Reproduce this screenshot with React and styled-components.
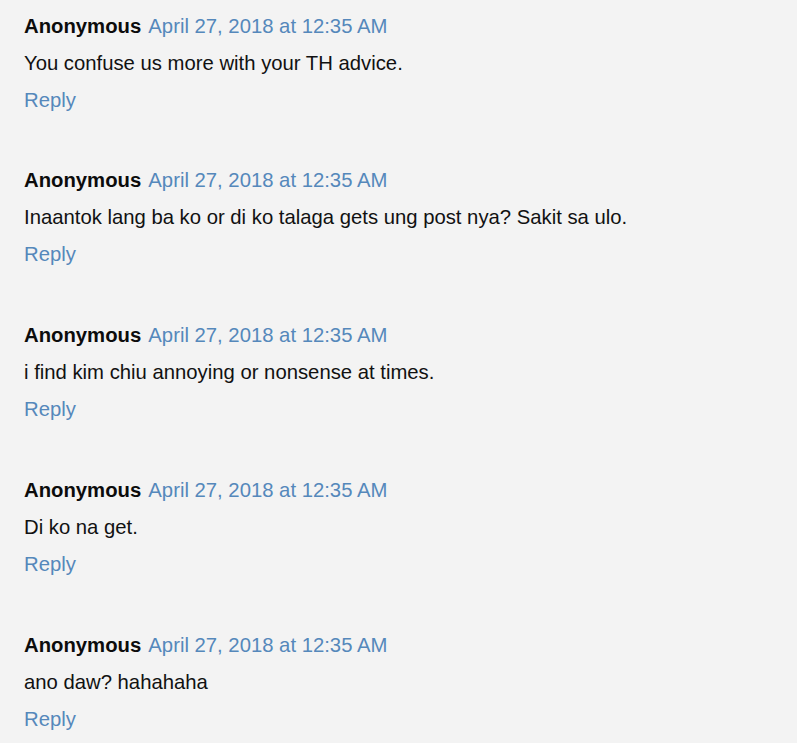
import React from "react";
import styled, { createGlobalStyle } from "styled-components";

const Global = createGlobalStyle`
  html, body { margin: 0; padding: 0; background: #f3f3f3; }
  body { font-family: "Liberation Sans", Arial, sans-serif; }
`;

const List = styled.div`
  display: flex;
  flex-direction: column;
  gap: 42.75px;
  padding: 6.6px 24px 0;
  font-size: 20.3px;
  color: #111;
`;

const Comment = styled.div`
  display: flex;
  flex-direction: column;
`;

const Header = styled.div`
  line-height: 38px;
  white-space: nowrap;
`;

const Author = styled.span`
  font-weight: bold;
  color: #0c0c0c;
`;

const DateLink = styled.a`
  margin-left: 1.5px;
  color: #5588bb;
  text-decoration: none;
`;

const Body = styled.div`
  line-height: 37px;
`;

const ReplyLink = styled.a`
  line-height: 37px;
  color: #5588bb;
  text-decoration: none;
  align-self: flex-start;
`;

const comments = [
  "You confuse us more with your TH advice.",
  "Inaantok lang ba ko or di ko talaga gets ung post nya? Sakit sa ulo.",
  "i find kim chiu annoying or nonsense at times.",
  "Di ko na get.",
  "ano daw? hahahaha",
];

export default function App() {
  return (
    <>
      <Global />
      <List>
        {comments.map((text, i) => (
          <Comment key={i}>
            <Header>
              <Author>Anonymous</Author>{" "}
              <DateLink href="#">April 27, 2018 at 12:35 AM</DateLink>
            </Header>
            <Body>{text}</Body>
            <ReplyLink href="#">Reply</ReplyLink>
          </Comment>
        ))}
      </List>
    </>
  );
}
